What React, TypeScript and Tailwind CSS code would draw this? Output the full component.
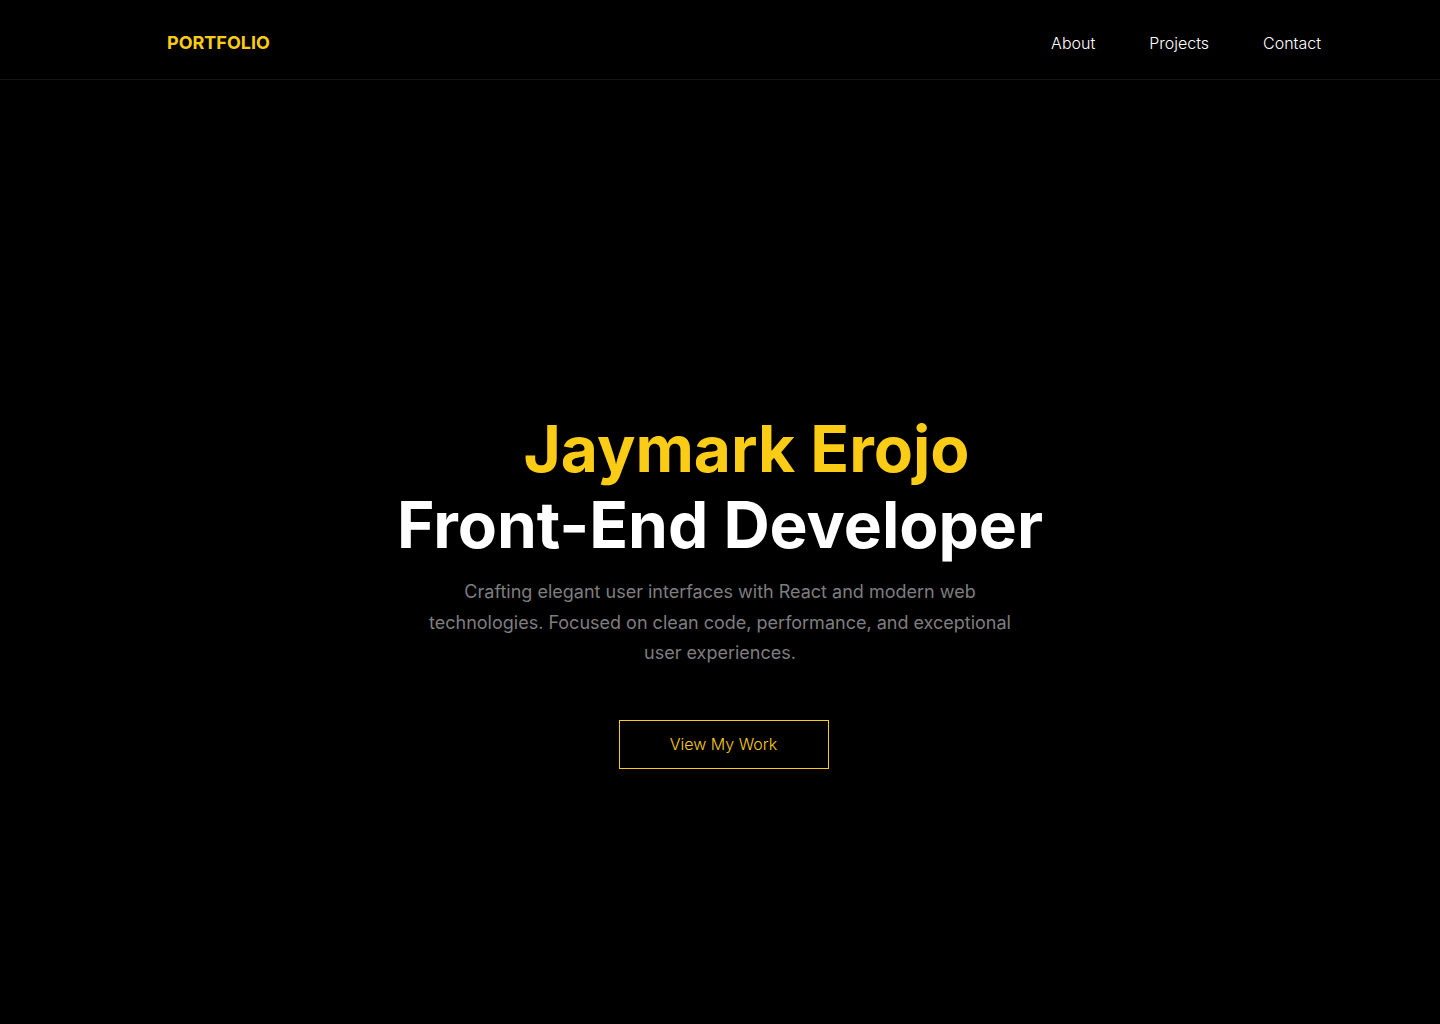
import React from "react"

const links = ["About", "Projects", "Contact"]

const Nav: React.FC = () => {
    return (
        <header className="h-20 pt-[6px] border-b border-[#141414] flex items-center justify-between pl-[167px] pr-[119px]">
            <a href="#" className="text-lg font-bold text-[#facc15]">PORTFOLIO</a>
            <nav className="flex items-center gap-[54px]">
                {links.map((l) => (
                    <a key={l} href="#" className="text-base font-light text-white">{l}</a>
                ))}
            </nav>
        </header>
    )
}

const Hero: React.FC = () => {
    return (
        <section className="flex flex-col items-center text-center pt-[331px] pb-[255px]">
            <h1 className="text-[64px] font-bold leading-[76px]">
                <span className="block text-[#facc15] ml-[53px]">Jaymark Erojo</span>
                <span className="block text-white">Front-End Developer</span>
            </h1>
            <p className="mt-[14px] max-w-[600px] text-lg leading-[30.5px] text-[#7e7e7e]">
                Crafting elegant user interfaces with React and modern web technologies. Focused on clean code, performance, and exceptional user experiences.
            </p>
            <a href="#" className="mt-[51px] ml-[7px] w-[210px] h-[49px] flex items-center justify-center border border-[#facc15] text-[#facc15] text-base font-light">
                View My Work
            </a>
        </section>
    )
}

export default function App() {
    return (
        <div className="min-h-screen bg-black font-['Inter',sans-serif]">
            <Nav />
            <Hero />
        </div>
    )
}
